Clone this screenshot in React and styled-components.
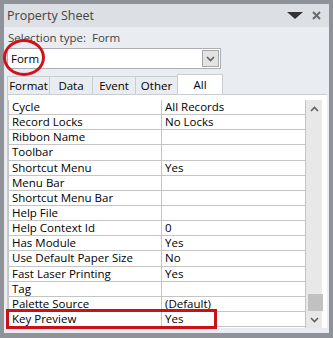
import React from "react";
import styled, { createGlobalStyle } from "styled-components";

const Global = createGlobalStyle`
  html, body { margin: 0; padding: 0; background: #8f9399; }
  body { font-family: "Open Sans", "Noto Sans", sans-serif; }
`;

const Frame = styled.div`
  width: 333px;
  height: 338px;
  box-sizing: border-box;
  padding: 4px 4px 5px 4px;
  background: #8f9399;
  position: relative;
`;

const Panel = styled.div`
  height: 100%;
  background: #e9ecf0;
  display: flex;
  flex-direction: column;
`;

const TitleBar = styled.div`
  height: 23px;
  background: #dcdfe3;
  display: flex;
  align-items: center;
  padding: 0 8px 0 3px;
  color: #444;
  font-size: 12.5px;
`;

const Title = styled.div`
  flex: 1;
`;

const TitleIcons = styled.div`
  display: flex;
  align-items: center;
  gap: 9px;
`;

const Body = styled.div`
  flex: 1;
  display: flex;
  flex-direction: column;
  padding: 0 2px 5px 3px;
`;

const SelLine = styled.div`
  height: 21px;
  display: flex;
  align-items: center;
  padding-left: 1px;
  color: #444;
  font-size: 11.5px;
  white-space: pre;
`;

const Combo = styled.div`
  width: 214px;
  height: 21px;
  box-sizing: border-box;
  background: #fff;
  border: 1px solid #abadb3;
  display: flex;
  align-items: center;
  justify-content: space-between;
  padding: 0 1px 0 3px;
  font-size: 11.5px;
  color: #000;
`;

const ComboBtn = styled.div`
  width: 17px;
  height: 17px;
  box-sizing: border-box;
  background: #e3e3e3;
  border: 1px solid #a5a5a5;
  display: flex;
  align-items: center;
  justify-content: center;
`;

const Tabs = styled.div`
  display: flex;
  align-items: flex-end;
  margin-top: 5px;
  height: 20px;
`;

const Tab = styled.div`
  width: ${(p) => p.$w}px;
  height: ${(p) => (p.$active ? 20 : 18)}px;
  box-sizing: border-box;
  display: flex;
  align-items: center;
  justify-content: center;
  font-size: 11.5px;
  color: #000;
  background: ${(p) => (p.$active ? "#fff" : "#e9ecf0")};
  border-top: 1px solid #c9ccd1;
  border-left: 1px solid #c9ccd1;
  border-right: ${(p) => (p.$last ? "1px solid #c9ccd1" : "none")};
`;

const Page = styled.div`
  flex: 1;
  background: #fff;
  border-top: 1px solid #c9ccd1;
  border-left: 1px solid #c9ccd1;
  padding: 5px 5px 0 0;
  display: flex;
  margin-right: 0;
`;

const Grid = styled.div`
  flex: 1;
  border-left: 1px solid #c4c4c4;
  border-right: 1px solid #c4c4c4;
  display: flex;
  flex-direction: column;
`;

const Row = styled.div`
  height: 15px;
  display: grid;
  grid-template-columns: 153px 1fr;
  border-bottom: 1px solid #c4c4c4;
  box-sizing: border-box;
  height: 15.15px;
  font-size: 11.5px;
  color: #000;
  line-height: 14px;
`;

const Name = styled.div`
  padding-left: 3px;
  border-right: 1px solid #c4c4c4;
  white-space: nowrap;
`;

const Value = styled.div`
  padding-left: 3px;
  white-space: nowrap;
`;

const Scroll = styled.div`
  width: 16px;
  background: #e8e8e8;
  display: flex;
  flex-direction: column;
  align-items: center;
`;

const Arrow = styled.div`
  height: 17px;
  width: 100%;
  display: flex;
  align-items: center;
  justify-content: center;
`;

const Track = styled.div`
  flex: 1;
  width: 100%;
  display: flex;
  flex-direction: column;
  justify-content: flex-end;
`;

const Thumb = styled.div`
  height: 17px;
  margin: 0 0 0 2px;
  width: 15px;
  background: #c1c1c1;
`;

const Circle = styled.div`
  position: absolute;
  left: 3px;
  top: 39px;
  width: 42px;
  height: 37px;
  box-sizing: border-box;
  border: 3px solid #d0131b;
  border-radius: 50%;
`;

const RedBox = styled.div`
  position: absolute;
  left: 6px;
  top: 309px;
  width: 211px;
  height: 20px;
  box-sizing: border-box;
  border: 3px solid #cc1018;
`;

const rows = [
  ["Cycle", "All Records"],
  ["Record Locks", "No Locks"],
  ["Ribbon Name", ""],
  ["Toolbar", ""],
  ["Shortcut Menu", "Yes"],
  ["Menu Bar", ""],
  ["Shortcut Menu Bar", ""],
  ["Help File", ""],
  ["Help Context Id", "0"],
  ["Has Module", "Yes"],
  ["Use Default Paper Size", "No"],
  ["Fast Laser Printing", "Yes"],
  ["Tag", ""],
  ["Palette Source", "(Default)"],
  ["Key Preview", "Yes"],
];

const Chevron = ({ up }) => (
  <svg width="9" height="6" viewBox="0 0 9 6">
    <path
      d={up ? "M1 5 L4.5 1.5 L8 5" : "M1 1 L4.5 4.5 L8 1"}
      fill="none"
      stroke="#606060"
      strokeWidth="1.6"
    />
  </svg>
);

export default function App() {
  return (
    <>
      <Global />
      <Frame>
        <Panel>
          <TitleBar>
            <Title>Property Sheet</Title>
            <TitleIcons>
              <svg width="16" height="7" viewBox="0 0 16 7">
                <path d="M0 0 H16 L8 7 Z" fill="#333" />
              </svg>
              <svg width="9" height="9" viewBox="0 0 9 9">
                <path d="M1 1 L8 8 M8 1 L1 8" stroke="#6a6a6a" strokeWidth="2" />
              </svg>
            </TitleIcons>
          </TitleBar>
          <Body>
            <SelLine>Selection type:  Form</SelLine>
            <Combo>
              <span>Form</span>
              <ComboBtn>
                <Chevron />
              </ComboBtn>
            </Combo>
            <Tabs>
              <Tab $w={42}>Format</Tab>
              <Tab $w={43}>Data</Tab>
              <Tab $w={43}>Event</Tab>
              <Tab $w={42}>Other</Tab>
              <Tab $w={46} $active $last>All</Tab>
            </Tabs>
            <Page>
              <Grid>
                {rows.map(([n, v]) => (
                  <Row key={n}>
                    <Name>{n}</Name>
                    <Value>{v}</Value>
                  </Row>
                ))}
              </Grid>
              <Scroll>
                <Arrow><Chevron up /></Arrow>
                <Track><Thumb /></Track>
                <Arrow><Chevron /></Arrow>
              </Scroll>
            </Page>
          </Body>
        </Panel>
        <Circle />
        <RedBox />
      </Frame>
    </>
  );
}
